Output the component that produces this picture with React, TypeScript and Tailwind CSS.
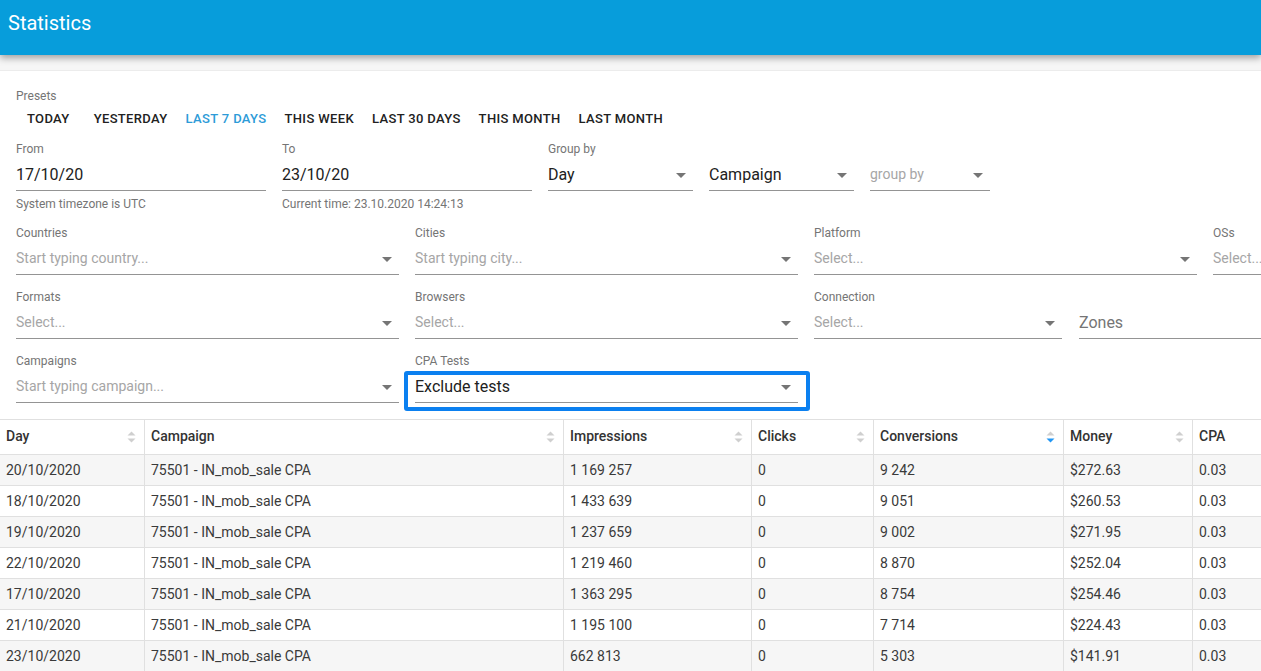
import React from "react";

const Caret = ({ className = "" }: { className?: string }) => (
  <svg width="24" height="24" viewBox="0 0 24 24" className={className}>
    <path d="M7 10l5 5 5-5z" fill="#757575" />
  </svg>
);

const SortIcon = ({ active = false }: { active?: boolean }) => (
  <svg width="9" height="14" viewBox="0 0 9 14">
    <path d="M0.5 5.5L4.5 1.5L8.5 5.5Z" fill="#cfcfcf" />
    <path d="M0.5 8.5L4.5 12.5L8.5 8.5Z" fill={active ? "#2196f3" : "#cfcfcf"} />
  </svg>
);

type FieldProps = {
  label?: string;
  value?: string;
  placeholder?: string;
  arrow?: boolean;
  className?: string;
  highlight?: boolean;
  floating?: string;
};

function Field({ label, value, placeholder, arrow, className = "", highlight, floating }: FieldProps) {
  return (
    <div className={"flex flex-col " + className}>
      <div className="h-[14px] text-[12px] leading-[14px] text-[#757575] whitespace-nowrap">{label ?? ""}</div>
      <div className="relative h-[35px] border-b border-[#949494] flex items-center pt-[3px] overflow-visible">
        {value !== undefined && <span className="text-[16px] text-[#212121] whitespace-nowrap">{value}</span>}
        {placeholder !== undefined && (
          <span className="text-[14px] text-[#a6a6a6] whitespace-nowrap">{placeholder}</span>
        )}
        {floating !== undefined && <span className="text-[16px] text-[#757575] whitespace-nowrap">{floating}</span>}
        {arrow && <Caret className="absolute right-0 top-[7px]" />}
        {highlight && (
          <div className="absolute left-[-11px] right-[-12px] top-[3px] bottom-[-9px] border-[4px] border-[#0b80f0] rounded-[3px]" />
        )}
      </div>
    </div>
  );
}

const presets = ["TODAY", "YESTERDAY", "LAST 7 DAYS", "THIS WEEK", "LAST 30 DAYS", "THIS MONTH", "LAST MONTH"];

const columns = [
  { name: "Day", w: "w-[145px]" },
  { name: "Campaign", w: "w-[419px]" },
  { name: "Impressions", w: "w-[188px]" },
  { name: "Clicks", w: "w-[122px]" },
  { name: "Conversions", w: "w-[190px]", active: true },
  { name: "Money", w: "w-[129px]" },
  { name: "CPA", w: "flex-1", nosort: true },
];

const rows = [
  ["20/10/2020", "75501 - IN_mob_sale CPA", "1 169 257", "0", "9 242", "$272.63", "0.03"],
  ["18/10/2020", "75501 - IN_mob_sale CPA", "1 433 639", "0", "9 051", "$260.53", "0.03"],
  ["19/10/2020", "75501 - IN_mob_sale CPA", "1 237 659", "0", "9 002", "$271.95", "0.03"],
  ["22/10/2020", "75501 - IN_mob_sale CPA", "1 219 460", "0", "8 870", "$252.04", "0.03"],
  ["17/10/2020", "75501 - IN_mob_sale CPA", "1 363 295", "0", "8 754", "$254.46", "0.03"],
  ["21/10/2020", "75501 - IN_mob_sale CPA", "1 195 100", "0", "7 714", "$224.43", "0.03"],
  ["23/10/2020", "75501 - IN_mob_sale CPA", "662 813", "0", "5 303", "$141.91", "0.03"],
];

export default function App() {
  return (
    <div className="w-[1261px] h-[671px] overflow-hidden bg-[#f6f6f6] font-['Roboto',sans-serif]">
      <header className="relative z-10 h-[55px] bg-[#079ddb] shadow-[0_3px_7px_rgba(0,0,0,0.35)] pl-[8px] pt-[10px]">
        <h1 className="text-[20px] leading-[26px] text-white font-normal">Statistics</h1>
      </header>
      <div className="mt-[15px] bg-white border-t border-[#ececec] h-[601px] overflow-hidden">
        <div className="px-[16px] pt-[18px]">
          <div className="h-[14px] text-[12px] leading-[14px] text-[#757575]">Presets</div>
          <div className="flex mt-[4px] h-[24px] items-center">
            {presets.map((p, i) => (
              <button
                key={p}
                className={
                  "h-[24px] text-[13px] font-medium tracking-[0.35px] whitespace-nowrap " +
                  (i === 0 ? "pl-[11px] pr-[15px] " : "px-[9px] ") +
                  (p === "LAST 7 DAYS" ? "text-[#2d9bd8]" : "text-[#212121]")
                }
              >
                {p}
              </button>
            ))}
          </div>

          <div className="flex gap-[16px] mt-[11px]">
            <div className="w-[250px]">
              <Field label="From" value="17/10/20" />
              <div className="mt-[6px] text-[12px] leading-[14px] text-[#757575]">System timezone is UTC</div>
            </div>
            <div className="w-[250px]">
              <Field label="To" value="23/10/20" />
              <div className="mt-[6px] text-[12px] leading-[14px] text-[#757575]">Current time: 23.10.2020 14:24:13</div>
            </div>
            <Field label="Group by" value="Day" arrow className="w-[145px]" />
            <Field value="Campaign" arrow className="w-[145px]" />
            <Field placeholder="group by" arrow className="w-[120px]" />
          </div>

          <div className="grid grid-cols-[383px_383px_383px_383px] gap-x-[16px] gap-y-[15px] mt-[15px]">
            <Field label="Countries" placeholder="Start typing country..." arrow />
            <Field label="Cities" placeholder="Start typing city..." arrow />
            <Field label="Platform" placeholder="Select..." arrow />
            <Field label="OSs" placeholder="Select..." />

            <Field label="Formats" placeholder="Select..." arrow />
            <Field label="Browsers" placeholder="Select..." arrow />
            <div className="col-span-2 flex gap-[17px]">
              <Field label="Connection" placeholder="Select..." arrow className="w-[248px]" />
              <Field floating="Zones" className="flex-1" />
            </div>

            <Field label="Campaigns" placeholder="Start typing campaign..." arrow />
            <Field label="CPA Tests" value="Exclude tests" arrow highlight />
          </div>
        </div>

        <div className="mt-[16px] border-t border-[#e0e0e0] text-[14px]">
          <div className="flex h-[35px] border-b border-[#e0e0e0] bg-white">
            {columns.map((c, i) => (
              <div
                key={c.name}
                className={
                  c.w +
                  " flex items-center justify-between pl-[6px] pr-[8px] pb-[1px] font-medium text-[#333333] " +
                  (i < columns.length - 1 ? "border-r border-[#e0e0e0]" : "")
                }
              >
                <span>{c.name}</span>
                {!c.nosort && <SortIcon active={!!c.active} />}
              </div>
            ))}
          </div>
          {rows.map((r, ri) => (
            <div
              key={ri}
              className={"flex h-[31px] border-b border-[#e0e0e0] " + (ri % 2 === 0 ? "bg-[#f6f6f6]" : "bg-white")}
            >
              {r.map((cell, ci) => (
                <div
                  key={ci}
                  className={
                    columns[ci].w +
                    " flex items-center pl-[6px] text-[#3a3a3a] whitespace-nowrap " +
                    (ci < r.length - 1 ? "border-r border-[#e0e0e0]" : "")
                  }
                >
                  {cell}
                </div>
              ))}
            </div>
          ))}
        </div>
      </div>
    </div>
  );
}
